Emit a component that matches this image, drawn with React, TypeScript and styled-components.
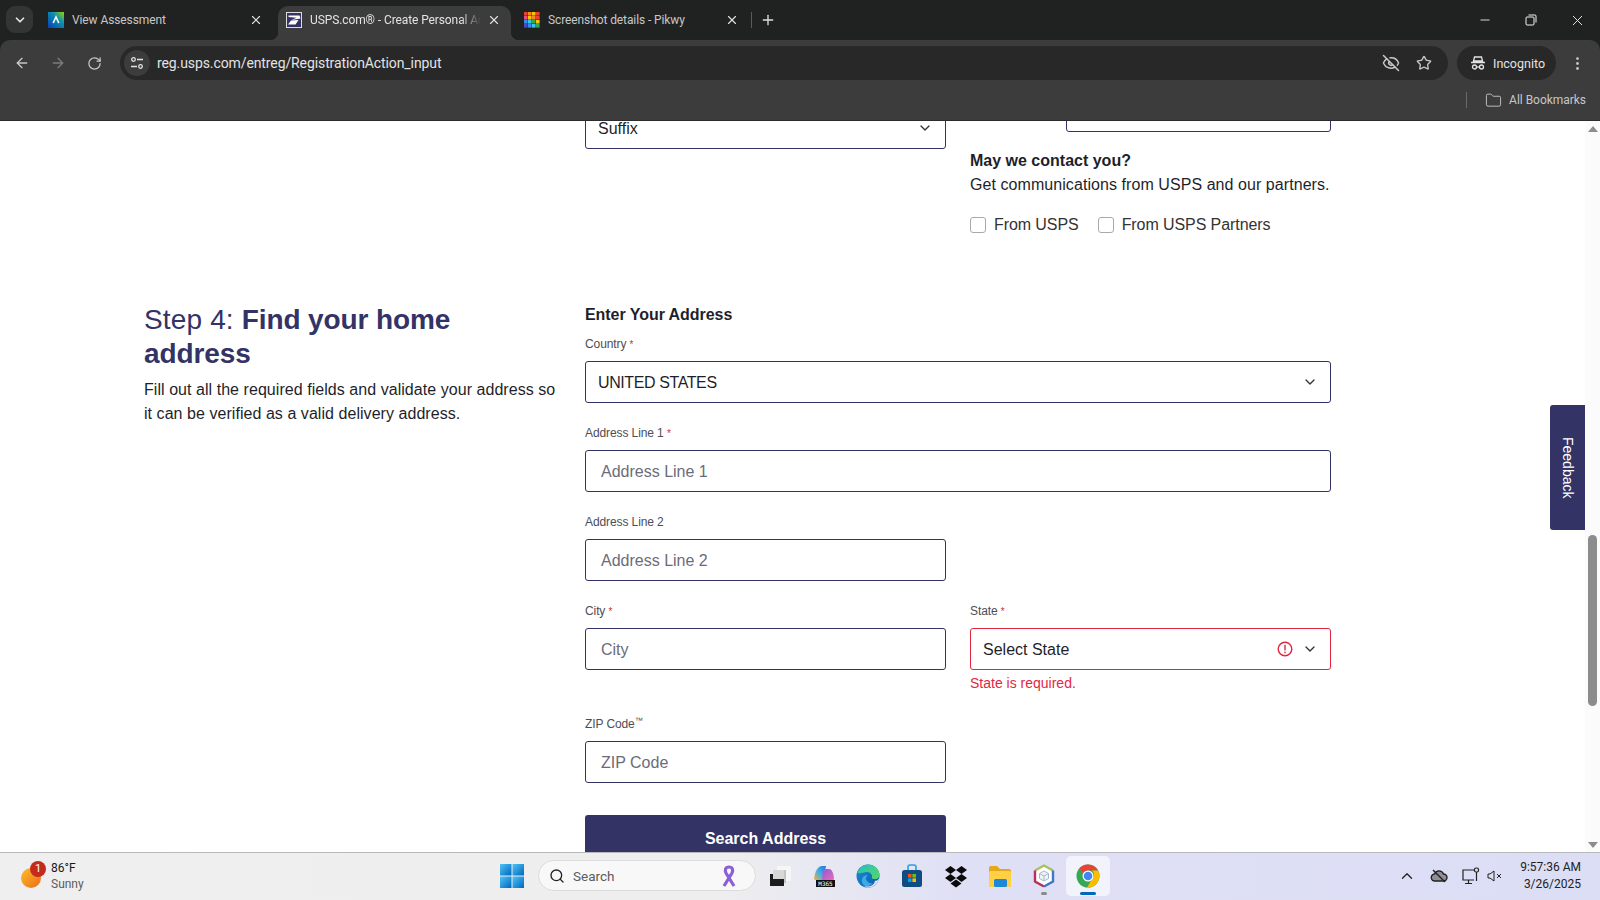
import React from "react";
import styled, { createGlobalStyle } from "styled-components";
import { ArrowLeft, ArrowRight, RotateCw, EyeOff, Star, MoreVertical, Folder, Plus, X, Minus, ChevronDown, ChevronUp, Search } from "lucide-react";

const Global = createGlobalStyle`
  html, body { margin: 0; padding: 0; width: 1600px; height: 900px; overflow: hidden; background: #fff; }
  * { box-sizing: border-box; }
`;

const Shell = styled.div`
  width: 1600px; height: 900px; display: flex; flex-direction: column; overflow: hidden;
  font-family: "Liberation Sans", Arial, sans-serif;
`;

/* ---------- browser chrome ---------- */
const Chrome = styled.header`
  flex: none; background: #202222;
`;
const TabStrip = styled.div`
  height: 40px; display: flex; align-items: flex-end; padding-left: 6px;
  font-family: Roboto, "Noto Sans", sans-serif;
`;
const TabMenu = styled.div`
  width: 27px; height: 27px; margin: 0 7px 7px 0; border-radius: 9px; background: #333535; color: #e3e3e3;
  display: flex; align-items: center; justify-content: center;
`;
const Tab = styled.div<{ $active?: boolean }>`
  position: relative; width: 233px; height: 34px; margin-right: 5px; padding: 0 8px 6px; display: flex; align-items: center;
  border-radius: 10px 10px 0 0; font-size: 12px; letter-spacing: -0.1px; flex: none;
  color: ${p => (p.$active ? "#e3e3e3" : "#c7c7c7")};
  background: ${p => (p.$active ? "#3c3c3c" : "transparent")};
  ${p => p.$active && `
    &::before, &::after { content: ""; position: absolute; bottom: 0; width: 8px; height: 8px; }
    &::before { left: -8px; background: radial-gradient(circle at 0 0, transparent 8px, #3c3c3c 8.5px); }
    &::after { right: -8px; background: radial-gradient(circle at 100% 0, transparent 8px, #3c3c3c 8.5px); }
  `}
`;
const TabIcon = styled.svg`
  width: 16px; height: 16px; flex: none; margin-right: 8px;
`;
const TabTitle = styled.span<{ $fade?: boolean }>`
  flex: 1; white-space: nowrap; overflow: hidden;
  ${p => p.$fade && `-webkit-mask-image: linear-gradient(90deg, #000 88%, transparent 100%); mask-image: linear-gradient(90deg, #000 88%, transparent 100%);`}
`;
const TabClose = styled.span`
  display: flex; margin: 0 2px 0 6px; color: #dedede;
`;
const TabDivider = styled.div`
  width: 1px; height: 16px; background: #5a5a5a; margin: 0 0 12px -3px;
`;
const NewTab = styled.div`
  display: flex; color: #dedede; margin: 0 0 12px 8px;
`;
const WindowControls = styled.div`
  margin-left: auto; display: flex; align-self: stretch; align-items: center; color: #f0f0f0;
`;
const WindowButton = styled.div`
  width: 46px; display: flex; justify-content: center;
`;

const Toolbar = styled.div`
  height: 40px; background: #3c3c3c; border-radius: 10px 10px 0 0; display: flex; align-items: center; padding: 6px 0 0 14px;
  font-family: Roboto, "Noto Sans", sans-serif;
`;
const NavButton = styled.div<{ $dim?: boolean }>`
  width: 16px; display: flex; justify-content: center; margin-right: 20px; color: ${p => (p.$dim ? "#7c7c7c" : "#c7c7c7")};
`;
const Omnibox = styled.div`
  width: 1328px; height: 34px; margin-left: -2px; background: #282828; border-radius: 17px; display: flex; align-items: center;
  padding: 0 16px 0 4px; color: #e3e3e3; font-size: 14px;
`;
const SiteInfo = styled.div`
  width: 26px; height: 26px; border-radius: 50%; background: #3c3c3c; display: flex; align-items: center; justify-content: center;
  margin-right: 7px; color: #e3e3e3;
`;
const Url = styled.span`
  flex: 1; letter-spacing: -0.1px;
`;
const OmniIcons = styled.div`
  display: flex; gap: 16px; color: #c7c7c7; align-items: center;
`;
const IncognitoPill = styled.div`
  width: 99px; height: 34px; margin-left: 9px; background: #282828; border-radius: 17px; display: flex; align-items: center;
  gap: 7px; padding-left: 13px; color: #e3e3e3; font-size: 12.5px;
`;
const MenuDots = styled.div`
  display: flex; color: #c7c7c7; margin-left: 13px;
`;
const BookmarkBar = styled.div`
  height: 41px; background: #3c3c3c; display: flex; align-items: center; justify-content: flex-end; padding: 0 14px 0 0;
  color: #c7c7c7; font-family: Roboto, "Noto Sans", sans-serif; font-size: 12px; letter-spacing: -0.03px; border-bottom: 1px solid #2c2c2c;
`;
const BookmarkDivider = styled.div`
  width: 1px; height: 16px; background: #6a6a6a; margin-right: 18px;
`;
const BookmarkIcon = styled.span`
  display: flex; margin-right: 7px; color: #c7c7c7;
`;

/* ---------- page ---------- */
const Main = styled.main`
  flex: 1; min-height: 0; display: flex; overflow: hidden; background: #fff;
`;
const Page = styled.div`
  position: relative; flex: 1; min-width: 0; overflow: hidden; color: #1f1f2b;
`;
const Scrolled = styled.div`
  margin-top: -31px; padding-left: 144px; width: 1331px;
`;
const TopGrid = styled.div`
  display: grid; grid-template-columns: 417px 361px 361px; column-gap: 24px;
`;
const SuffixCell = styled.div`
  grid-column: 2; padding-top: 17px;
`;
const ContactCell = styled.div`
  grid-column: 3;
`;
const Box = styled.div<{ $error?: boolean; $narrow?: boolean }>`
  height: 42px; border: 1px solid ${p => (p.$error ? "#e3263f" : "#333366")}; border-radius: 3px; display: flex; align-items: center;
  padding: 0 12px; font-size: 16px; color: #1f1f2b; background: #fff;
  ${p => p.$narrow && `width: 265px; margin-left: auto;`}
`;
const BoxText = styled.span<{ $tight?: boolean }>`
  flex: 1; padding-top: 2px; ${p => p.$tight && `letter-spacing: -0.4px;`}
`;
const Chevron = styled.span`
  display: flex; color: #333;
`;
const AlertIcon = styled.svg`
  width: 16px; height: 16px; margin-right: 9px; flex: none;
`;
const Heading3 = styled.div`
  font-size: 16px; line-height: 24px; font-weight: 700; color: #1f1f2b;
`;
const ContactTitle = styled(Heading3)`
  margin-top: 17px;
`;
const BodyLine = styled.div`
  font-size: 16px; line-height: 24px; white-space: nowrap; letter-spacing: 0.065px;
`;
const CheckRow = styled.div`
  display: flex; margin-top: 16px; height: 24px; align-items: center; font-size: 16px; color: #333; letter-spacing: -0.08px;
`;
const CheckItem = styled.label`
  display: flex; align-items: center; gap: 8px; margin-right: 19px;
`;
const CheckBox = styled.span`
  width: 16px; height: 16px; border: 1px solid #a9a9a9; border-radius: 3px; background: #fff; flex: none;
`;
const StepSection = styled.section`
  display: grid; grid-template-columns: 417px 746px; column-gap: 24px; margin-top: 65px;
`;
const StepIntro = styled.div`
  padding-top: 1px;
`;
const StepTitle = styled.h2`
  margin: 0; font-size: 28px; line-height: 34px; font-weight: 400; color: #333366; letter-spacing: 0.15px;
  b { font-weight: 700; letter-spacing: -0.1px; }
`;
const StepText = styled.p`
  margin: 7px 0 0; font-size: 16px; line-height: 24px; color: #1f1f2b; letter-spacing: 0.05px;
`;
const FormTitle = styled(Heading3)`
  margin-top: 1px; margin-bottom: 8px; letter-spacing: -0.05px;
`;
const FormGrid = styled.div`
  display: grid; grid-template-columns: 361px 361px; column-gap: 24px;
`;
const Field = styled.div<{ $wide?: boolean; $gap?: number }>`
  grid-column: ${p => (p.$wide ? "1 / 3" : "auto")};
  margin-bottom: ${p => p.$gap ?? 21}px;
`;
const Label = styled.div`
  font-size: 12px; line-height: 18px; height: 18px; margin-bottom: 8px; color: #4d4d57; letter-spacing: -0.1px;
  i { font-style: normal; font-size: 10px; color: #e3263f; }
  sup { font-size: 8px; line-height: 0; }
`;
const TextInput = styled.input`
  display: block; width: 100%; height: 42px; border: 1px solid #333366; border-radius: 3px; padding: 2px 15px 0; font: 16px "Liberation Sans", Arial, sans-serif;
  color: #1f1f2b; background: #fff; outline: none;
  &::placeholder { color: #6c6c78; opacity: 1; }
`;
const ErrorText = styled.div`
  margin-top: 4px; font-size: 14px; line-height: 18px; height: 18px; color: #e3263f;
`;
const SearchButton = styled.button`
  display: block; width: 361px; height: 48px; border: 0; border-radius: 3px; background: #333366; color: #fff;
  font: 700 16px "Liberation Sans", Arial, sans-serif; padding: 0;
`;
const FeedbackTab = styled.div`
  position: absolute; right: 0; top: 284px; width: 35px; height: 125px; background: #333366; border-radius: 3px 0 0 3px;
  color: #fff; display: flex; align-items: center; justify-content: center; font-size: 14px;
  span { writing-mode: vertical-rl; }
`;
const ScrollBar = styled.div`
  width: 15px; flex: none; background: #fbfbfb; display: flex; flex-direction: column; align-items: center;
`;
const ScrollArrowUp = styled.div`
  width: 0; height: 0; margin-top: 5px; border: 5px solid transparent; border-top: 0; border-bottom: 6px solid #8c8c8c;
`;
const ScrollThumb = styled.div`
  width: 9px; height: 171px; margin-top: 403px; background: #8c8c8c; border-radius: 5px;
`;
const ScrollArrowDown = styled.div`
  width: 0; height: 0; margin-top: auto; margin-bottom: 4px; border: 5px solid transparent; border-bottom: 0; border-top: 6px solid #8c8c8c;
`;

/* ---------- taskbar ---------- */
const Taskbar = styled.footer`
  height: 48px; flex: none; border-top: 1px solid #b9b9bd; padding-bottom: 2px; display: flex; align-items: center;
  background: linear-gradient(90deg, #efefef 0%, #eeeeef 45%, #dfe0f5 60%, #dcdef5 100%);
  font-family: Roboto, "Noto Sans", sans-serif; color: #1a1a1a;
`;
const Weather = styled.div`
  width: 500px; flex: none; display: flex; align-items: center; padding-left: 21px;
`;
const WeatherIcon = styled.div`
  position: relative; width: 20px; height: 20px; margin-right: 10px; margin-top: 4px; border-radius: 50%;
  background: linear-gradient(135deg, #fbc02d, #ee6a1a);
`;
const WeatherBadge = styled.span`
  position: absolute; left: 9px; top: -7px; width: 16px; height: 16px; border-radius: 50%; background: #c42b1c; color: #fff;
  font-size: 11px; line-height: 16px; text-align: center;
`;
const WeatherText = styled.div`
  font-size: 12px; line-height: 16px;
  span { display: block; color: #5c5c5c; }
`;
const StartIcon = styled.svg`
  width: 24px; height: 24px; flex: none;
`;
const SearchPill = styled.div`
  width: 218px; height: 31px; margin-left: 14px; border-radius: 16px; background: #f8f8f8; border: 1px solid #dcdcdc; display: flex; align-items: center;
  padding: 0 18px 0 10px; color: #5c5c5c; font-size: 13.5px; gap: 8px;
`;
const SearchWord = styled.span`
  flex: 1;
`;
const AppIcons = styled.div`
  display: flex; margin-left: 2px;
`;
const AppSlot = styled.div<{ $active?: boolean; $mark?: string }>`
  position: relative; width: 44px; height: 40px; display: flex; align-items: center; justify-content: center; border-radius: 5px;
  background: ${p => (p.$active ? "rgba(255,255,255,.6)" : "transparent")};
  ${p => p.$mark && `&::after { content: ""; position: absolute; bottom: 1px; left: 50%; transform: translateX(-50%); height: 3px; border-radius: 2px; width: ${p.$active ? 16 : 6}px; background: ${p.$mark}; }`}
`;
const AppSvg = styled.svg`
  width: 24px; height: 24px;
`;
const Tray = styled.div`
  margin-left: auto; display: flex; align-items: center; color: #222; padding-right: 19px;
`;
const TrayIcon = styled.span<{ $gap: number }>`
  display: flex; margin-right: ${p => p.$gap}px;
`;
const Clock = styled.div`
  font-size: 12px; line-height: 17px; text-align: right; margin-left: 17px;
`;

const Select = ({ text, error, tight }: { text: string; error?: boolean; tight?: boolean }) => (
  <Box $error={error}>
    <BoxText $tight={tight}>{text}</BoxText>
    {error && (
      <AlertIcon viewBox="0 0 16 16">
        <circle cx="8" cy="8" r="6.8" fill="none" stroke="#e3263f" strokeWidth="1.4" />
        <rect x="7.3" y="3.8" width="1.4" height="5.6" fill="#e3263f" />
        <rect x="7.3" y="10.6" width="1.4" height="1.6" fill="#e3263f" />
      </AlertIcon>
    )}
    <Chevron><ChevronDown size={16} strokeWidth={2} /></Chevron>
  </Box>
);

export default function App() {
  return (
    <Shell>
      <Global />
      <Chrome>
        <TabStrip>
          <TabMenu><ChevronDown size={14} strokeWidth={3} /></TabMenu>
          <Tab>
            <TabIcon viewBox="0 0 16 16">
              <defs><linearGradient id="a" x1="0" y1="1" x2="1" y2="0"><stop offset="0" stopColor="#0a3fb5" /><stop offset=".6" stopColor="#0a8fb0" /><stop offset="1" stopColor="#9ad400" /></linearGradient></defs>
              <rect width="16" height="16" fill="url(#a)" />
              <path d="M5.200 11 8 5l2.800 6" fill="none" stroke="#fff" strokeWidth="1.6" />
            </TabIcon>
            <TabTitle>View Assessment</TabTitle>
            <TabClose><X size={14} /></TabClose>
          </Tab>
          <Tab $active>
            <TabIcon viewBox="0 0 16 16">
              <rect x=".5" y=".5" width="15" height="15" fill="#333366" stroke="#dcdcdc" />
              <path d="M2.500 3.500h11l1 3-9 1.500 5-2.200-8-.8zM2 12.500l3-4 7.500-.5-3 4.500z" fill="#fff" />
            </TabIcon>
            <TabTitle $fade>USPS.com® - Create Personal Account</TabTitle>
            <TabClose><X size={14} /></TabClose>
          </Tab>
          <Tab>
            <TabIcon viewBox="0 0 16 16">
              {["#e94335","#f58a1f","#f7c600","#e94335","#e84f7a","#f7c600","#f58a1f","#e94335","#4285f4","#35c8e8","#35a853","#f7c600","#3f51b5","#4285f4","#35c8e8","#35a853"].map((c, i) => (
                <rect key={i} x={(i % 4) * 4} y={Math.floor(i / 4) * 4} width="3.6" height="3.6" fill={c} />
              ))}
            </TabIcon>
            <TabTitle>Screenshot details - Pikwy</TabTitle>
            <TabClose><X size={14} /></TabClose>
          </Tab>
          <TabDivider />
          <NewTab><Plus size={16} /></NewTab>
          <WindowControls>
            <WindowButton><Minus size={14} strokeWidth={1.5} /></WindowButton>
            <WindowButton>
              <svg width="12" height="12" viewBox="0 0 12 12" fill="none" stroke="currentColor"><rect x="1" y="3" width="8" height="8" rx="1" /><path d="M3.500 1H10a1 1 0 0 1 1 1v6.500" /></svg>
            </WindowButton>
            <WindowButton><X size={17} strokeWidth={1.3} /></WindowButton>
          </WindowControls>
        </TabStrip>

        <Toolbar>
          <NavButton><ArrowLeft size={16} /></NavButton>
          <NavButton $dim><ArrowRight size={16} /></NavButton>
          <NavButton><RotateCw size={15} /></NavButton>
          <Omnibox>
            <SiteInfo>
              <svg width="14" height="14" viewBox="0 0 14 14" fill="none" stroke="currentColor" strokeWidth="1.300">
                <circle cx="3.500" cy="3.500" r="1.800" /><path d="M7 3.500h6M1 10.500h6" /><circle cx="10.500" cy="10.500" r="1.800" />
              </svg>
            </SiteInfo>
            <Url>reg.usps.com/entreg/RegistrationAction_input</Url>
            <OmniIcons>
              <EyeOff size={18} />
              <Star size={16} />
            </OmniIcons>
          </Omnibox>
          <IncognitoPill>
            <svg width="16" height="16" viewBox="0 0 16 16" fill="none" stroke="currentColor" strokeWidth="1.3">
              <path d="M4.500 2h7l1 4h-9zM1 7.500h14" />
              <circle cx="4.500" cy="12" r="2" /><circle cx="11.500" cy="12" r="2" /><path d="M6.500 12h3" />
            </svg>
            Incognito
          </IncognitoPill>
          <MenuDots><MoreVertical size={17} /></MenuDots>
        </Toolbar>

        <BookmarkBar>
          <BookmarkDivider />
          <BookmarkIcon><Folder size={17} strokeWidth={1.3} /></BookmarkIcon>
          All Bookmarks
        </BookmarkBar>
      </Chrome>

      <Main>
        <Page>
          <Scrolled>
            <TopGrid>
              <SuffixCell><Select text="Suffix" /></SuffixCell>
              <ContactCell>
                <Box $narrow />
                <ContactTitle>May we contact you?</ContactTitle>
                <BodyLine>Get communications from USPS and our partners.</BodyLine>
                <CheckRow>
                  <CheckItem><CheckBox />From USPS</CheckItem>
                  <CheckItem><CheckBox />From USPS Partners</CheckItem>
                </CheckRow>
              </ContactCell>
            </TopGrid>
            <StepSection>
              <StepIntro>
                <StepTitle>Step 4: <b>Find your home address</b></StepTitle>
                <StepText>Fill out all the required fields and validate your address so it can be verified as a valid delivery address.</StepText>
              </StepIntro>
              <div>
                <FormTitle>Enter Your Address</FormTitle>
                <FormGrid>
                  <Field $wide><Label>Country <i>*</i></Label><Select text="UNITED STATES" tight /></Field>
                  <Field $wide><Label>Address Line 1 <i>*</i></Label><TextInput placeholder="Address Line 1" /></Field>
                  <Field><Label>Address Line 2</Label><TextInput placeholder="Address Line 2" /></Field>
                  <div />
                  <Field $gap={0}><Label>City <i>*</i></Label><TextInput placeholder="City" /></Field>
                  <Field $gap={23}>
                    <Label>State <i>*</i></Label>
                    <Select text="Select State" error />
                    <ErrorText>State is required.</ErrorText>
                  </Field>
                  <Field $gap={32}><Label>ZIP Code<sup>™</sup></Label><TextInput placeholder="ZIP Code" /></Field>
                  <div />
                </FormGrid>
                <SearchButton>Search Address</SearchButton>
              </div>
            </StepSection>
          </Scrolled>
          <FeedbackTab><span>Feedback</span></FeedbackTab>
        </Page>
        <ScrollBar>
          <ScrollArrowUp />
          <ScrollThumb />
          <ScrollArrowDown />
        </ScrollBar>
      </Main>

      <Taskbar>
        <Weather>
          <WeatherIcon><WeatherBadge>1</WeatherBadge></WeatherIcon>
          <WeatherText>86°F<span>Sunny</span></WeatherText>
        </Weather>
        <StartIcon viewBox="0 0 24 24">
          <defs><linearGradient id="w" x1="0" y1="0" x2="1" y2="1"><stop offset="0" stopColor="#4fc3f7" /><stop offset="1" stopColor="#0067c0" /></linearGradient></defs>
          <rect x="0" y="0" width="11.500" height="11.500" fill="url(#w)" /><rect x="12.500" y="0" width="11.500" height="11.500" fill="url(#w)" />
          <rect x="0" y="12.500" width="11.500" height="11.500" fill="url(#w)" /><rect x="12.500" y="12.500" width="11.500" height="11.500" fill="url(#w)" />
        </StartIcon>
        <SearchPill>
          <Search size={16} color="#222" />
          <SearchWord>Search</SearchWord>
          <svg width="16" height="24" viewBox="0 0 16 24" fill="none" stroke="#8a5fd8" strokeWidth="3.200"><path d="M3 22 11 9c1.500-3 .5-6-3-6S3.500 6 5 9l8 13" /></svg>
        </SearchPill>
        <AppIcons>
          <AppSlot>
            <AppSvg viewBox="0 0 24 24"><rect x="9" y="2" width="14" height="15" rx="1" fill="#f6f6f6" /><rect x="5" y="6" width="13" height="13" fill="#c4c4c4" /><rect x="2" y="10" width="14" height="12" fill="#1c1c1c" /><rect x="5" y="6" width="11" height="9" fill="#d8d8d8" /></AppSvg>
          </AppSlot>
          <AppSlot>
            <AppSvg viewBox="0 0 24 24">
              <defs>
                <linearGradient id="m1" x1="0" y1="1" x2="1" y2="0"><stop offset="0" stopColor="#f3b13a" /><stop offset=".5" stopColor="#3fb0e8" /><stop offset="1" stopColor="#2a6fdb" /></linearGradient>
                <linearGradient id="m2" x1="0" y1="0" x2="1" y2="1"><stop offset="0" stopColor="#8e5bd8" /><stop offset="1" stopColor="#ef6ab8" /></linearGradient>
              </defs>
              <path d="M2 15C3 7 6 2 10 2h4l-3 14H3z" fill="url(#m1)" />
              <path d="M11 5h6c3 0 4.500 4 5 9 .2 2-1 2.500-3 2.500h-9z" fill="url(#m2)" />
              <rect x="4" y="16" width="19" height="7" fill="#111" />
              <text x="13.500" y="21.700" textAnchor="middle" fontSize="6" fontFamily="'DejaVu Sans Mono', monospace" fill="#fff">M365</text>
            </AppSvg>
          </AppSlot>
          <AppSlot>
            <AppSvg viewBox="0 0 24 24">
              <defs>
                <linearGradient id="e1" x1="0" y1="0" x2="1" y2="1"><stop offset="0" stopColor="#2bb6c9" /><stop offset=".5" stopColor="#3ecf8e" /><stop offset="1" stopColor="#58d26a" /></linearGradient>
                <linearGradient id="e2" x1="0" y1="0" x2="1" y2="1"><stop offset="0" stopColor="#1a8fd8" /><stop offset="1" stopColor="#0b5aa8" /></linearGradient>
              </defs>
              <circle cx="12" cy="12" r="11.500" fill="url(#e2)" />
              <path d="M1.500 9C3 4 7 .5 12 .5c6 0 11.500 4.500 11.500 10.500 0 3.500-3 4.500-6 4-1.500-.3-2-1-1.500-2 .5-1.500-1-5-5-5-4 0-6 2-9 1z" fill="url(#e1)" />
              <path d="M23.500 14c-.5 3-4 9.500-11 9.500-2 0-3-.5-4-1.500 3 1 7 .5 9-2s1-3 1-3c2 0 4-1 5-3z" fill="#dfe0f5" />
              <path d="M10 22.500C6 21 5 17 6.500 14c1-2 3-3 5-2.500-1.500 1-2 3-1 5 1 2 3.500 3 6 3-2 2-4 2.800-6.500 2.500z" fill="#3fa9e8" />
            </AppSvg>
          </AppSlot>
          <AppSlot>
            <AppSvg viewBox="0 0 24 24">
              <rect x="2" y="6" width="20" height="17" rx="2.500" fill="#0f4c81" /><path d="M8 6V3a2 2 0 0 1 2-2h4a2 2 0 0 1 2 2v3" fill="none" stroke="#2aa0e0" strokeWidth="1.600" />
              <rect x="8" y="10" width="3.600" height="3.600" fill="#f25022" /><rect x="12.400" y="10" width="3.600" height="3.600" fill="#7fba00" /><rect x="8" y="14.400" width="3.600" height="3.600" fill="#00a4ef" /><rect x="12.400" y="14.400" width="3.600" height="3.600" fill="#ffb900" />
            </AppSvg>
          </AppSlot>
          <AppSlot>
            <AppSvg viewBox="0 0 24 24" fill="#0b0b0b">
              <path d="M6.500 2 12 6 6.500 10 1 6zM17.500 2 23 6l-5.500 4L12 6zM6.500 10 12 14l-5.500 4L1 14zM17.500 10 23 14l-5.500 4L12 14zM12 15.500l5.500 4L12 23.500 6.500 19.500z" />
            </AppSvg>
          </AppSlot>
          <AppSlot>
            <AppSvg viewBox="0 0 24 24">
              <path d="M1 4a2 2 0 0 1 2-2h6l3 3h9a2 2 0 0 1 2 2v2H1z" fill="#e6a817" /><rect x="1" y="7" width="22" height="16" rx="1.500" fill="#ffd044" /><rect x="6" y="15" width="13" height="8" rx="1.500" fill="#1e88d8" />
            </AppSvg>
          </AppSlot>
          <AppSlot $mark="#8a8a8a">
            <AppSvg viewBox="0 0 24 24">
              <path d="M12 1.500 21 6.500v11L12 22.500 3 17.500v-11z" fill="#fff" />
              <path d="M3 6.500 12 1.500l9 5" fill="none" stroke="#a9c25a" strokeWidth="2.400" />
              <path d="M3 6.500v11L12 22.500" fill="none" stroke="#b8305a" strokeWidth="2.400" />
              <path d="M12 22.500 21 17.500V6.500" fill="none" stroke="#3e78c8" strokeWidth="2.400" />
              <path d="M12 7 16.500 9.500v5L12 17 7.500 14.500v-5z" fill="#eef4fb" stroke="#a8b8c8" />
              <path d="M7.500 9.500 12 12l4.500-2.500M12 12v5" fill="none" stroke="#a8b8c8" />
            </AppSvg>
          </AppSlot>
          <AppSlot $active $mark="#0067c0">
            <AppSvg viewBox="0 0 24 24">
              <circle cx="12" cy="12" r="11.500" fill="#34a853" />
              <path d="M12 .5A11.500 11.500 0 0 1 22 6.500H12a5.500 5.500 0 0 0-5 3.200L3.500 4.200A11.500 11.500 0 0 1 12 .5z" fill="#ea4335" />
              <path d="M22 6.500A11.500 11.500 0 0 1 11 23.500l5-8.500a5.500 5.500 0 0 0 0-8.500z" fill="#fbbc04" />
              <circle cx="12" cy="12" r="5.500" fill="#fff" /><circle cx="12" cy="12" r="4.300" fill="#4285f4" />
            </AppSvg>
          </AppSlot>
        </AppIcons>
        <Tray>
          <TrayIcon $gap={14}><ChevronUp size={18} strokeWidth={1.7} /></TrayIcon>
          <TrayIcon $gap={14}>
            <svg width="18" height="18" viewBox="0 0 18 18" fill="none" stroke="currentColor" strokeWidth="1.400">
              <path d="M5 14a3.500 3.500 0 0 1-.5-7A4.800 4.800 0 0 1 13.500 7a3.500 3.500 0 0 1 0 7z" fill="#8f8f99" />
              <path d="M3 3l12 12" />
            </svg>
          </TrayIcon>
          <TrayIcon $gap={7}>
            <svg width="18" height="18" viewBox="0 0 18 18" fill="none" stroke="currentColor" strokeWidth="1.200"><path d="M12 3H1v10h11M6.500 13v3M3 16.500h7" /><rect x="12.500" y="1" width="4" height="4" rx="1.500" /><path d="M14.500 5v9" /></svg>
          </TrayIcon>
          <TrayIcon $gap={0}>
            <svg width="16" height="16" viewBox="0 0 16 16" fill="none" stroke="currentColor" strokeWidth="1"><path d="M1 6v4h2l4 3V3L3 6zM10 6l4 4M14 6l-4 4" /></svg>
          </TrayIcon>
          <Clock>9:57:36 AM<br />3/26/2025</Clock>
        </Tray>
      </Taskbar>
    </Shell>
  );
}
